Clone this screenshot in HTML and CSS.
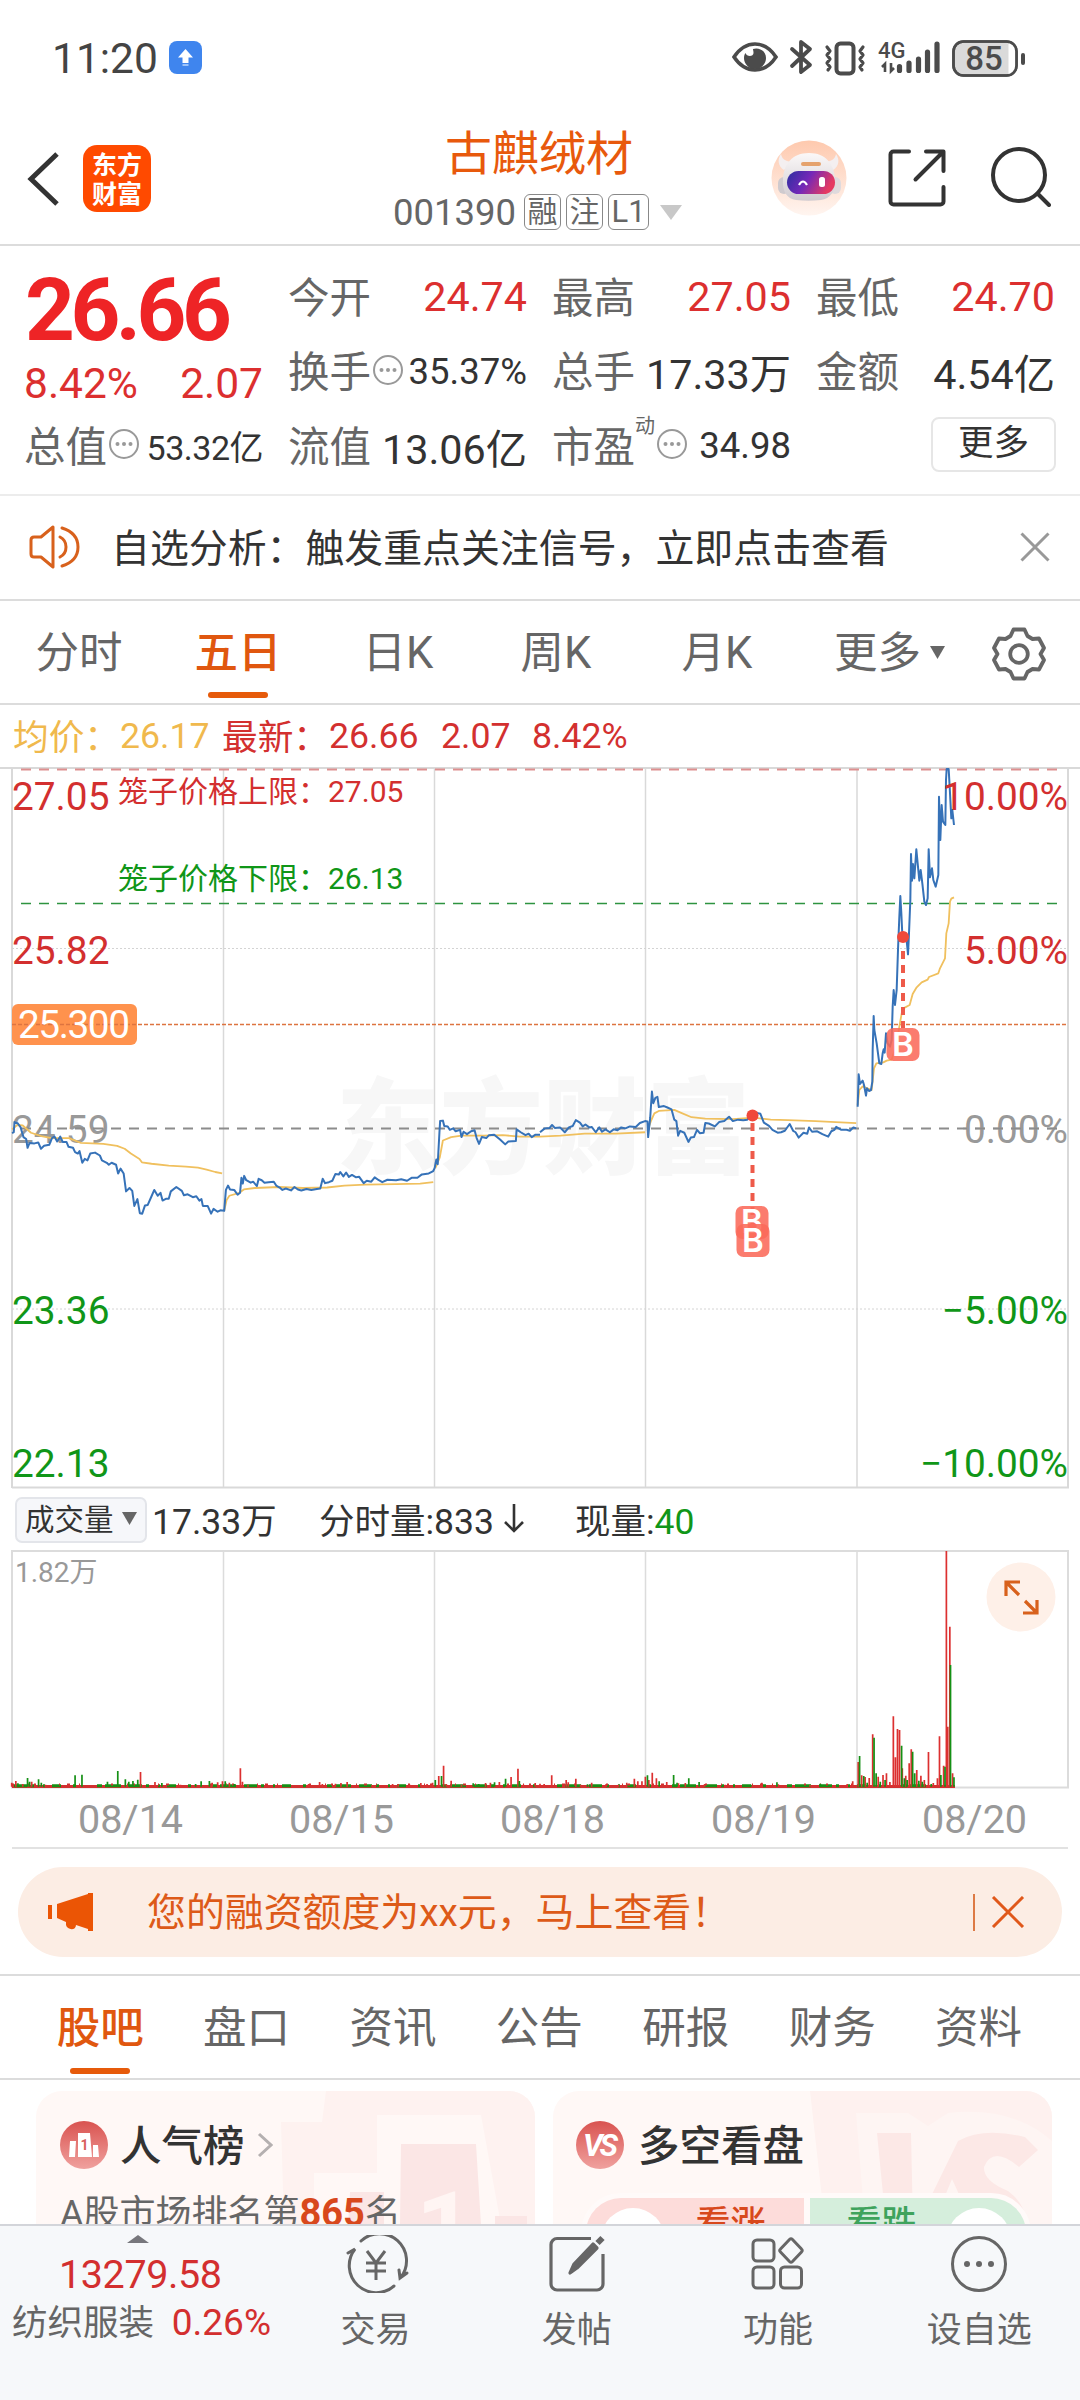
FILE: index.html
```html
<!DOCTYPE html>
<html lang="zh-CN">
<head>
<meta charset="utf-8">
<title>古麒绒材 001390</title>
<link rel="stylesheet" href="styles.css">
</head>
<body>
<div class="status">
  <span class="clock">11:20</span>
  <svg class="app-dot" width="33" height="33" viewBox="0 0 33 33"><rect width="33" height="33" rx="8" fill="#3f85ee"/><path d="M16.500 8l7.500 8.500h-4.500v5.500h-6v-5.500H9z" fill="#fff"/><path d="M13.500 24h6" stroke="#9cc3fa" stroke-width="2"/></svg>
  <svg class="status-icons" width="300" height="50" viewBox="0 0 300 50" fill="none" stroke="#4b4b4b">
    <path d="M3 25C9 16 16 12 24 12s15 4 21 13c-6 9-13 13-21 13S9 34 3 25z" stroke-width="3.600"/>
    <path d="M22 17c5-2 13 1 13 9a11 11 0 0 1-22 0c0-2 .5-4 1.500-5 1 4 8 4 8 0 0-2-.5-3-.5-4z" fill="#4b4b4b" stroke="none"/>
    <path d="M61 17l18 16-9 7V10l9 7-18 17" stroke-width="3.800" stroke-linejoin="round" stroke-linecap="round"/>
    <rect x="105.500" y="11.500" width="17" height="30" rx="4" stroke-width="4"/>
    <path d="M96 15l3 4-3 4 3 4-3 4 3 4-2 3M132 15l-3 4 3 4-3 4 3 4-3 4 2 3" stroke-width="3.200" stroke-linecap="round" stroke-linejoin="round"/>
    <path d="M154 40V32l-3 3M160 31v8l3-3" stroke-width="2.600"/>
    <path d="M168.500 34.500v4M178 31v7.500M187.500 27v11.500M196.500 20v18.500M206 12v26.500" stroke-width="5.200" stroke-linecap="round"/>
    <text class="net" x="147" y="26">4G</text>
    <rect x="222.500" y="9.500" width="63" height="34" rx="10" fill="#dadada" stroke-width="2.600"/>
    <path d="M277.500 11h3a5 5 0 0 1 4 5v21a5 5 0 0 1-4 5h-3z" fill="#fff" stroke="none"/>
    <rect x="222.500" y="9.500" width="63" height="34" rx="10" stroke-width="2.600"/>
    <path d="M292 23v8" stroke-width="4" stroke-linecap="round"/>
    <text class="batt" x="253" y="38">85</text>
  </svg>
</div>

<header class="header">
  <div class="head-left">
    <svg width="32" height="54" viewBox="0 0 32 54" fill="none" stroke="#333" stroke-width="5"><path d="M30 2L4 27l26 25"/></svg>
    <div class="logo"><span>东方</span><span>财富</span></div>
  </div>
  <div class="head-mid">
    <h1>古麒绒材</h1>
    <div class="code-row">
      <span class="code">001390</span><i class="tag">融</i><i class="tag">注</i><i class="tag l1">L1</i>
      <svg width="22" height="15" viewBox="0 0 22 15"><path d="M0 0h22L11 15z" fill="#c8c8c8"/></svg>
    </div>
  </div>
  <div class="head-right">
    <svg width="76" height="76" viewBox="0 0 76 76">
      <defs>
        <linearGradient id="peach" x1="0" y1="0" x2="0" y2="1"><stop offset="0" stop-color="#fec9ae"/><stop offset="1" stop-color="#fff5f0"/></linearGradient>
        <linearGradient id="visor" x1="0" y1="0" x2="1" y2=".3"><stop offset="0" stop-color="#2c2fa0"/><stop offset=".5" stop-color="#7428b8"/><stop offset="1" stop-color="#e53a62"/></linearGradient>
        <linearGradient id="shell" x1="0" y1="0" x2="0" y2="1"><stop offset="0" stop-color="#fbf8f8"/><stop offset="1" stop-color="#d0cbd0"/></linearGradient>
      </defs>
      <circle cx="38" cy="38" r="37.500" fill="url(#peach)"/>
      <path d="M10 14c-4 6-3 12 3 16l7-8c-6-1-9-3-10-8zM65 14c4 6 3 12-3 16l-7-8c6-1 9-3 10-8z" fill="#f4eff0"/>
      <rect x="7" y="37" width="12" height="17" rx="6" fill="#cfcace"/><rect x="58" y="37" width="12" height="17" rx="6" fill="#dfdadd"/>
      <path d="M38 13c17 0 25 11 26 26 1 12-5 20-14 21-8 1-17 1-25 0-9-1-14-9-13-21 1-15 9-26 26-26z" fill="url(#shell)"/>
      <rect x="30" y="22" width="20" height="4" rx="2" fill="#e5a26d"/>
      <rect x="16" y="31" width="48" height="23" rx="11.500" fill="url(#visor)"/>
      <path d="M28 45q4-7 8 0" fill="none" stroke="#fff" stroke-width="2.200"/><rect x="48" y="37" width="6" height="10" rx="2.500" fill="#fff"/>
    </svg>
    <svg width="58" height="58" viewBox="0 0 58 58" fill="none" stroke="#333" stroke-width="4" stroke-linecap="round" stroke-linejoin="round"><path d="M21 2.500H5.500a3 3 0 0 0-3 3v47a3 3 0 0 0 3 3h47a3 3 0 0 0 3-3V38M38 2.500h17.500V22M55 3L27.500 30.500"/></svg>
    <svg width="60" height="60" viewBox="0 0 60 60" fill="none" stroke="#333" stroke-width="4" stroke-linecap="round"><circle cx="28" cy="28" r="26"/><path d="M46.500 46.500L58 58"/></svg>
  </div>
</header>

<section class="quote">
  <div class="price">
    <strong>26.66</strong>
    <div class="chg"><span>8.42%</span><span>2.07</span></div>
  </div>
  <div class="cell"><label>今开</label><b class="up">24.74</b></div>
  <div class="cell"><label>最高</label><b class="up">27.05</b></div>
  <div class="cell"><label>最低</label><b class="up">24.70</b></div>
  <div class="cell"><label>换手</label><svg class="more" viewBox="0 0 32 32"><use href="#dots"/></svg><b class="sm">35.37%</b></div>
  <div class="cell"><label>总手</label><b>17.33万</b></div>
  <div class="cell"><label>金额</label><b>4.54亿</b></div>
  <div class="cell"><label>总值</label><svg class="more" viewBox="0 0 32 32"><use href="#dots"/></svg><b class="xs">53.32亿</b></div>
  <div class="cell"><label>流值</label><b>13.06亿</b></div>
  <div class="cell"><label>市盈</label><sup>动</sup><svg class="more" viewBox="0 0 32 32"><use href="#dots"/></svg><b class="sm">34.98</b></div>
  <div class="cell last"><button>更多</button></div>
</section>
<svg width="0" height="0" class="defs"><defs><g id="dots"><circle cx="16" cy="16" r="14" fill="none" stroke="#999" stroke-width="2"/><circle cx="9.500" cy="16" r="2" fill="#999"/><circle cx="16" cy="16" r="2" fill="#999"/><circle cx="22.500" cy="16" r="2" fill="#999"/></g></defs></svg>

<section class="notice">
  <svg width="52" height="44" viewBox="0 0 52 44" fill="none" stroke="#d8611c" stroke-width="3" stroke-linejoin="round"><path d="M24 2L12 12H5q-3 0-3 3v14q0 3 3 3h7l12 10z"/><path d="M31 12q6 3 6 10t-6 10M33 3q16 5 16 19T33 41" stroke-linecap="round"/></svg>
  <p>自选分析：触发重点关注信号，立即点击查看</p>
  <svg width="30" height="30" viewBox="0 0 30 30" stroke="#999" stroke-width="3"><path d="M1.500 1.500l27 27M28.500 1.500l-27 27"/></svg>
</section>

<nav class="periods">
  <a>分时</a><a class="on">五日</a><a>日K</a><a>周K</a><a>月K</a>
  <a class="pmore">更多<svg width="15" height="13" viewBox="0 0 15 13"><path d="M0 0h15L7.500 13z" fill="#666"/></svg></a>
  <svg width="54" height="54" viewBox="-27 -27 54 54" fill="none" stroke="#666" stroke-width="3.800" stroke-linejoin="round"><path d="M-5.500-24.500H5.500L8.500-18 13.500-15 20-15.500 25-6 21.500 0 25 6 20 15.500 13.500 15 8.500 18 5.500 24.500H-5.500L-8.500 18-13.500 15-20 15.500-25 6-21.500 0-25-6-20-15.500-13.500-15-8.500-18z"/><circle r="8.800"/></svg>
</nav>

<div class="legend">
  <span class="avg">均价：</span><span class="avg v1">26.17</span><span class="v2">最新：</span><span class="v3">26.66</span><span class="v4">2.07</span><span>8.42%</span>
</div>

<svg class="chart" width="1080" height="722" viewBox="0 767 1080 722">
  <g class="mark"><text x="336" y="1166" textLength="414" lengthAdjust="spacingAndGlyphs">东方财富</text></g>
  <g stroke="#d9d9d9" stroke-width="2" fill="none">
    <path d="M0 768H1080M12 1487.500H1069"/><path d="M12 768V1488M1068 768V1488" stroke-width="2"/>
    <path d="M223.500 768V1488M434.500 768V1488M645.500 768V1488M857 768V1488" stroke-width="1.500"/>
  </g>
  <g stroke="#d4d4d4" stroke-dasharray="2 2"><path d="M12 948.500H1068M12 1309H1068"/></g>
  <g class="axis up"><text x="12" y="810">27.05</text><text x="12" y="964">25.82</text></g>
  <g class="axis down"><text x="12" y="1324">23.36</text><text x="12" y="1477">22.13</text></g>
  <g class="axis flat"><text x="12" y="1143">24.59</text></g>
  <path d="M21 769.500H1060" stroke="#dd8f8f" stroke-width="2" stroke-dasharray="10 8"/>
  <path d="M21 903.500H1060" stroke="#2e9440" stroke-width="1.500" stroke-dasharray="10 8"/>
  <path d="M21 1128.500H1060" stroke="#8c8c8c" stroke-width="2" stroke-dasharray="10 8"/>
  <rect x="12" y="1004" width="125" height="41" rx="6" fill="#ff924d"/>
  <path d="M12 1024.500H1068" stroke="#dd7440" stroke-width="1.400" stroke-dasharray="4 2"/>
  <text class="axis cost" x="18" y="1038" textLength="112">25.300</text>
  <g class="cage"><text class="up" x="118" y="802">笼子价格上限：</text><text class="up" x="328" y="802">27.05</text><text class="down" x="118" y="889">笼子价格下限：</text><text class="down" x="328" y="889">26.13</text></g>
  <g class="avgline">
    <path transform="translate(0 760) scale(.34439 .4847)" d="M35 762L50 753 66 754 90 769 120 776 150 780 200 780 235 790 300 792 340 796 362 802 380 812 405 823 412 830 440 833 490 837 540 839 575 841 600 845 625 850 645 853M651 930L658 908 666 899 695 893 708 886 740 883 810 881 880 883 950 882 1000 878 1060 876 1150 875 1220 874 1258 871M1264 842L1277 820 1286 785 1310 778 1340 775 1400 775 1460 774 1510 777 1568 777"/>
    <path transform="translate(540 760) scale(.34439 .4847)" d="M0 777L60 775 130 771 220 771 305 768M312 765L322 745 332 729 345 724 390 722 410 728 440 737 480 740 560 741 620 738 670 742 720 743 800 745 918 749"/>
    <path transform="translate(840 760) scale(.33333)" d="M53 1035L58 990 68 979 80 984 95 990 102 925 109 910 130 907 140 902 155 899 170 850 178 800 186 755 190 745 209 735 218 702 230 682 245 667 263 659 267 651 295 640 300 625 315 595 319 520 326 490 330 425 334 416 342 412"/>
  </g>
  <g class="line">
    <path transform="translate(0 760) scale(.34439 .4847)" d="M35 770L40 768 42 747 52 750 60 758 68 778 76 782 80 800 86 790 100 791 111 789 119 802 128 796 143 794 151 780 158 777 166 787 175 777 182 788 193 788 199 798 212 800 218 809 226 812 231 807 239 831 246 823 254 826 262 812 276 810 290 816 296 826 310 831 316 835 324 831 337 835 343 853 350 843 359 853 366 890 376 883 384 889 390 920 399 906 406 935 413 936 421 919 429 918 440 900 448 887 458 899 466 893 472 909 483 905 490 905 496 890 512 881 528 889 534 898 545 896 560 902 570 900 579 909 585 906 589 920 603 920 613 936 620 926 632 932 640 929 651 930 656 887 662 878 668 886 680 887 690 897 697 893 701 862 705 874 709 858 715 867 728 872 735 870 746 879 751 864 760 867 768 872 780 871 795 870 802 878 812 882 820 887 830 884 845 888 855 881 865 886 875 888 890 885 904 887 920 885 930 884 937 864 944 873 955 871 965 868 974 854 984 855 988 850 997 859 1005 851 1013 860 1022 856 1034 861 1043 860 1056 873 1065 868 1078 870 1088 861 1100 867 1110 871 1125 866 1150 867 1165 865 1182 868 1195 862 1212 862 1225 855 1245 853 1258 848 1262 842 1267 824 1271 834 1276 768 1278 745 1286 744 1290 755 1300 756 1306 763 1316 760 1323 766 1336 763 1340 778 1346 767 1356 772 1368 766 1378 764 1384 780 1391 792 1399 778 1412 780 1420 774 1435 773 1452 783 1467 793 1476 787 1498 786 1500 762 1512 768 1526 774 1535 771 1544 778 1555 773 1568 773"/>
    <path transform="translate(540 760) scale(.34439 .4847)" d="M0 768L14 760 28 759 35 753 43 759 58 758 72 768 84 758 95 755 104 743 116 748 124 756 132 752 143 758 150 757 162 768 172 758 180 767 190 762 203 768 214 762 225 764 236 758 248 760 261 756 278 757 290 749 305 745 312 746 314 778 320 738 325 684 329 708 335 697 341 695 345 716 360 714 370 717 382 721 390 742 396 745 401 775 407 765 419 769 431 788 438 779 447 778 456 763 464 770 475 769 480 749 490 750 508 756 520 747 535 745 549 736 560 745 575 742 590 743 602 742 617 730 629 728 640 730 650 748 665 755 675 763 690 769 700 768 711 765 725 751 735 765 742 768 751 779 765 769 776 771 781 758 790 767 805 766 820 772 837 777 846 766 855 763 860 757 875 763 890 763 900 765 910 758 918 760"/>
    <path transform="translate(840 760) scale(.33333)" d="M53 1040L56 943 60 972 68 962 72 975 78 1007 81 985 87 993 93 990 97 965 98 870 101 768 103 810 110 850 118 910 124 912 128 880 131 868 134 878 138 820 143 850 150 860 155 840 158 740 161 690 165 735 170 690 174 570 178 470 181 408 184 460 187 525 193 520 198 520 204 583 207 520 211 420 213 282 216 362 219 312 223 355 229 268 233 310 238 362 242 330 247 370 253 425 258 435 263 415 266 268 270 352 276 325 280 360 287 380 295 345 297 110 301 240 305 135 309 185 316 195 318 60 320 27 326 27 329 80 334 175 337 150 342 195"/>
  </g>
  <g class="axis right up"><text x="1068" y="810">10.00%</text><text x="1068" y="964">5.00%</text></g>
  <g class="axis right flat"><text x="1068" y="1143">0.00%</text></g>
  <g class="axis right down"><text x="1068" y="1324">−5.00%</text><text x="1068" y="1477">−10.00%</text></g>
  <path d="M963 1128.500H1060" stroke="#8c8c8c" stroke-width="1.500" stroke-dasharray="10 8" stroke-dashoffset="6"/>
  <g stroke="#ee5a4a" stroke-width="4" stroke-dasharray="8 6"><path d="M752.500 1123V1224M903 951V1028"/></g>
  <circle cx="752.500" cy="1115.500" r="6" fill="#f0493a"/><circle cx="903" cy="937" r="6" fill="#f0493a"/>
  <g class="buy"><rect x="735.500" y="1206" width="33" height="33" rx="7"/><text x="752" y="1233">B</text>
  <rect x="736.500" y="1224" width="33" height="33" rx="7"/><text x="753" y="1252">B</text>
  <rect x="886.500" y="1028" width="33" height="33" rx="7"/><text x="903" y="1056">B</text></g>
</svg>

<div class="vol-head">
  <span class="pick">成交量<svg width="15" height="13" viewBox="0 0 15 13"><path d="M0 0h15L7.500 13z" fill="#666"/></svg></span>
  <span class="w1">17.33万</span><span class="w2">分时量:833<svg width="22" height="32" viewBox="0 0 22 32" fill="none" stroke="#333" stroke-width="2.600"><path d="M11 2v27M2 20l9 9 9-9"/></svg></span><span>现量:<em>40</em></span>
</div>

<svg class="volume" width="1080" height="240" viewBox="0 1550 1080 240">
  <g stroke="#dcdcdc" stroke-width="1.500" fill="none"><rect x="12" y="1551" width="1056" height="236.500" stroke-width="2"/><path d="M223.500 1551V1787M434.500 1551V1787M645.500 1551V1787M857 1551V1787"/></g>
  <text class="vmax" x="15" y="1582">1.82万</text>
  <path d="M12 1786.500H955" stroke="#d23030" stroke-width="3"/>
  <path d="M14 1785.800H930" stroke="#159015" stroke-width="3" stroke-dasharray="13 4 3 9 2 7 9 12 3 21 5 3 16 8"/>
  <path d="M12 1784.500H860" stroke="#d23030" stroke-width="2" stroke-dasharray="2 14 1 5 2 23 1 7 3 9 1 31"/>
  <g stroke-width="1.700" fill="none" class="bars">
    <path class="r" transform="translate(0 1480) scale(.68878 .33333)" d="M17 920V908M23 920V903M33 920V912M46 920V905M66 920V914M204 920V876M225 920V906M262 920V914M308 920V908M316 920V907M323 920V904M333 920V908M349 920V865M352 920V905M360 920V914M448 920V912M464 920V906M468 920V912M487 920V911M495 920V909M504 920V906M540 920V915M570 920V912M578 920V912M595 920V914M611 920V909M620 920V912M628 920V908M637 920V888M644 920V857M648 920V912M655 920V902M670 920V914M705 920V909M712 920V908M725 920V906M742 920V891M752 920V866M760 920V914M777 920V909M784 920V911M790 920V912M801 920V886M822 920V900M825 920V907M836 920V896M843 920V914M859 920V908M880 920V912M898 920V914M910 920V908M921 920V896M926 920V904M932 920V904M937 920V890M942 920V900M947 920V878M953 920V895M968 920V906M985 920V910M995 920V909M1023 920V912M1053 920V914M1106 920V908M1130 920V913M1176 920V915M1230 920V912M1238 920V904M1246 920V846M1251 920V886M1256 920V891M1262 920V894M1267 920V763M1275 920V890M1282 920V885M1287 920V880M1292 920V906M1297 920V709M1300 920V832M1303 920V747M1306 920V750M1310 920V865M1315 920V887M1320 920V850M1323 920V808M1331 920V870M1337 920V887M1342 920V900M1348 920V816M1355 920V909M1361 920V895M1364 920V769M1370 920V857M1374 920V213M1376 920V740M1379 920V440M1383 920V880"/>
    <path class="g" transform="translate(0 1480) scale(.68878 .33333)" d="M26 922V910M40 920V894M43 920V905M56 920V898M60 920V908M109 920V886M119 920V884M156 920V905M171 920V873M182 920V898M187 920V905M193 920V903M200 920V899M235 920V909M284 920V912M292 920V904M304 920V903M327 920V904M340 920V912M632 920V900M641 920V888M687 920V910M695 920V912M718 920V907M734 920V896M754 920V903M853 920V913M940 920V886M957 920V904M978 920V885M983 920V908M1000 920V895M1015 920V906M1090 920V914M1128 920V907M1191 920V911M1248 920V828M1254 920V888M1259 920V908M1269 920V773M1272 920V880M1278 920V905M1285 920V900M1309 920V797M1313 920V895M1317 920V900M1325 920V815M1328 920V880M1334 920V902M1339 920V905M1352 920V912M1366 920V885M1372 920V860M1380 920V555M1385 920V892"/>
  </g>
  <circle cx="1021" cy="1597" r="34.500" fill="#fef0e8"/>
  <path d="M1006 1596v-14h14M1007 1583l12 12M1037 1600v13h-14M1036 1612l-11-11" fill="none" stroke="#d8611c" stroke-width="3.200"/>
</svg>
<div class="dates"><span>08/14</span><span>08/15</span><span>08/18</span><span>08/19</span><span>08/20</span></div>

<section class="banner">
  <svg width="46" height="40" viewBox="0 0 46 40" fill="#eb5505"><path d="M0 13h4v14H0zM9 12L40 2V1h5v38h-5v-2l-12-4c0 6-9 5-10 0v-3l-9-4z"/></svg>
  <p>您的融资额度为xx元，马上查看！</p>
  <i></i>
  <svg width="34" height="32" viewBox="0 0 34 32" stroke="#e0581a" stroke-width="3"><path d="M2 1l30 30M32 1L2 31"/></svg>
</section>

<nav class="tabs"><a class="on">股吧</a><a>盘口</a><a>资讯</a><a>公告</a><a>研报</a><a>财务</a><a>资料</a></nav>

<section class="cards">
  <article class="card">
    <svg class="art" width="499" height="134" viewBox="0 0 499 134"><path d="M290 0H499V134H465L445 24H341V82H278V134H248L245 31H286z" fill="#fef2f0"/><path d="M365 53h75l5 81h-81zM314 101h34v33h-36zM459 125h32v9h-32z" fill="#fbe6e5"/><text class="big1" x="380" y="172">1</text></svg>
    <h2><svg width="48" height="48" viewBox="0 0 48 48"><defs><linearGradient id="badge" x1="0" y1="0" x2="0" y2="1"><stop offset="0" stop-color="#d95350"/><stop offset="1" stop-color="#f0a19e"/></linearGradient></defs><circle cx="24" cy="24" r="24" fill="url(#badge)"/><path d="M18 36V12h12l2 24zM10 20h6l-1 16H9zM33 24h5l1 12h-6z" fill="#fff"/><text class="one" x="24.500" y="29">1</text></svg><span>人气榜</span><svg width="16" height="26" viewBox="0 0 16 26" fill="none" stroke="#b5b0b0" stroke-width="3"><path d="M2 2l12 11L2 24"/></svg></h2>
    <p>A股市场排名第<b>865</b>名</p>
  </article>
  <article class="card">
    <svg class="art" width="499" height="134" viewBox="0 0 499 134"><path d="M257 0H499V134H272z" fill="#fef1ef"/><path d="M303 22H355L375 35 395 22Q460 15 499 50V134H312z" fill="#fef5f3"/><path d="M324 42H358L360 134H333zM364 134L405 50Q430 36 472 46L485 59 466 76Q440 54 431 76 430 90 455 100 475 115 472 134H420L399 88 380 134z" fill="#fce8e6"/></svg>
    <h2><svg width="48" height="48" viewBox="0 0 48 48"><circle cx="24" cy="24" r="24" fill="url(#badge)"/><text class="vs" x="23" y="35">VS</text></svg><span>多空看盘</span></h2>
    <div class="pill"><span class="bull">看涨</span><span class="bear">看跌</span></div>
  </article>
</section>

<footer class="dock">
  <div class="index"><svg width="22" height="8" viewBox="0 0 22 8"><path d="M0 8L11 0l11 8z" fill="#77777c"/></svg><strong>13279.58</strong><div><span>纺织服装</span><em>0.26%</em></div></div>
  <a><svg width="66" height="58" viewBox="0 0 66 58" fill="none" stroke="#666" stroke-width="3"><path d="M18 6A27 27 0 0 1 58 42M5 18l7-4A27 27 0 0 0 51 51M64 38l-7 5-1-8" stroke-linecap="round"/><path d="M24 16l9 12 9-12M33 28v17M23 28h20M23 36h20"/></svg>交易</a>
  <a><svg width="58" height="58" viewBox="0 0 58 58" fill="none" stroke="#666" stroke-width="3.200"><path d="M43 3.500H9a6 6 0 0 0-6 6V49a6 6 0 0 0 6 6h40a6 6 0 0 0 6-6V19"/><path d="M22 38l4-9 19-20 4 4-20 20z" fill="#666" stroke-linejoin="round"/><path d="M49.500 8l5-5" stroke-width="6"/></svg>发帖</a>
  <a><svg width="54" height="54" viewBox="0 0 54 54" fill="none" stroke="#666" stroke-width="3"><rect x="2" y="3" width="21" height="21" rx="4"/><rect x="2" y="30" width="21" height="21" rx="4"/><rect x="29.500" y="30" width="21" height="21" rx="4"/><path d="M38.500 2.500q1.500-1.500 3 0l9 9.500q1.500 1.500 0 3l-9 9.500q-1.500 1.500-3 0l-9-9.500q-1.500-1.500 0-3z"/></svg>功能</a>
  <a><svg width="58" height="58" viewBox="0 0 58 58"><circle cx="29" cy="29" r="26.500" fill="none" stroke="#666" stroke-width="3"/><circle cx="17" cy="29" r="3" fill="#666"/><circle cx="29" cy="29" r="3" fill="#666"/><circle cx="41" cy="29" r="3" fill="#666"/></svg>设自选</a>
</footer>
</body>
</html>
```
FILE: styles.css
```css
* { box-sizing: border-box; margin: 0; padding: 0; }
body {
  width: 1080px; height: 2400px; overflow: hidden; background: #fff;
  display: flex; flex-direction: column;
  font-family: Roboto, "Noto Sans CJK SC", sans-serif; color: #333;
}
body > * { flex: none; }
svg { display: block; flex: none; }
i, em { font-style: normal; }
.defs { position: absolute; }

.status { height: 110px; display: flex; align-items: flex-start; padding: 33px 49px 0 52px; }
.clock { font-size: 42.500px; line-height: 51px; color: #444; width: 117px; }
.app-dot { margin-top: 8px; }
.status-icons { margin: -1px 0 0 auto; }
.status-icons text { stroke: none; fill: #4b4b4b; font-weight: 500; }
.net { font-size: 22px; }
.batt { font-size: 33px; text-anchor: middle; }

.header { height: 136px; border-bottom: 2px solid #dcdcdc; display: flex; align-items: flex-start; }
.head-left { width: 390px; display: flex; align-items: center; padding: 35px 0 0 27px; gap: 24px; }
.logo {
  width: 68px; height: 67px; border-radius: 14px; background: #ff4a00; color: #fff;
  display: flex; flex-direction: column; justify-content: center; align-items: center;
  font: 700 25px/29px "Noto Sans CJK SC", sans-serif; padding-bottom: 2px;
}
.head-mid { width: 381px; padding-top: 16px; }
h1 { font-size: 47px; line-height: 56px; font-weight: 400; color: #e8590c; margin-left: 55px; }
.code-row { display: flex; align-items: center; height: 40px; margin-top: 10px; gap: 5px; padding-left: 3px; }
.code { font-size: 36.500px; color: #666; width: 126px; }
.tag { width: 37px; height: 36px; border: 1.500px solid #888; border-radius: 6px; color: #666; font-size: 30px; line-height: 33px; text-align: center; }
.l1 { width: 41px; font-size: 31px; }
.code-row svg { margin-left: 6px; }
.head-right { display: flex; align-items: center; padding-top: 30px; }
.head-right svg + svg { margin-left: 41px; }
.head-right svg:last-child { margin-left: 45px; margin-top: -2px; }

.quote {
  height: 250px; padding: 14px 24px 0; border-bottom: 2px solid #ececec;
  display: grid; grid-template-columns: repeat(4, 239px); grid-template-rows: repeat(3, 74.500px); column-gap: 25px;
}
.price { grid-row: span 2; color: #ee2426; }
.price strong { display: block; font-size: 87px; line-height: 88px; letter-spacing: -4.500px; margin: 6px 0 0 1px; font-weight: 700; }
.chg { display: flex; justify-content: space-between; font-size: 42.500px; line-height: 50px; margin-top: 5px; color: #dc2f2f; }
.cell { display: flex; align-items: center; white-space: nowrap; color: #333; font-size: 41.300px; }
.cell label { font-size: 41.500px; color: #666; margin-top: -5px; }
.cell b { font-weight: 400; margin: -1px 0 0 auto; }
.cell .sm { font-size: 36.500px; }
.cell .xs { font-size: 34px; letter-spacing: -.5px; }
.cell .up { color: #dc2f2f; }
.cell sup { font-size: 20px; color: #666; align-self: flex-start; margin-top: 3px; line-height: 28px; }
.more { width: 32px; height: 32px; margin: -4px 0 0 1px; }
.last { justify-content: flex-end; }
button { width: 125px; height: 55px; border: 2px solid #e6e6e6; border-radius: 8px; background: #fff; font: 35.500px/46px Roboto, "Noto Sans CJK SC", sans-serif; color: #333; margin: -3px -1px 0 0; padding-bottom: 3px; }

.notice { height: 105px; border-bottom: 2px solid #dcdcdc; display: flex; align-items: center; padding: 0 30px 0 29px; }
.notice svg { margin-top: -2px; }
.notice p { font-size: 38.900px; margin: -6px 0 0 30px; flex: 1; }

.periods { height: 104px; border-bottom: 2px solid #dcdcdc; display: grid; align-items: center; grid-template-columns: 158px 160px 160px 156px 166px 192px 1fr; font-size: 43.500px; color: #666; }
.periods a { height: 100%; line-height: 105px; text-align: center; }
.periods .pmore { display: flex; align-items: center; gap: 9px; padding-left: 34px; }
.pmore svg { margin-top: -3px; }
.on { color: #e0570f; font-weight: 500; position: relative; }
.on::after { content: ""; position: absolute; left: 50%; bottom: 8px; width: 60px; height: 6px; margin-left: -30px; border-radius: 3px; background: #e65a0a; }

.legend { height: 62px; display: flex; align-items: center; padding-left: 13px; font-size: 35.700px; color: #d3302f; white-space: nowrap; }
.legend .avg { color: #f0b94d; }
.legend span:first-child { width: 107px; }
.legend span:first-child, .legend .v2 { margin-top: -4px; }
.v1 { width: 102px; }
.v2 { width: 107px; }
.v3 { width: 112px; }
.v4 { width: 91px; }

.axis, .axis text { font-size: 38.800px; }
.axis.right { text-anchor: end; }
.up { fill: #d32f2f; }
.down { fill: #109618; }
.flat { fill: #999; }
.cost { fill: #fff; }
.cage { font-size: 30px; }
.mark { font: 900 104px "Noto Sans CJK SC", sans-serif; fill: #f7f7f7; }
.avgline path, .line path { fill: none; vector-effect: non-scaling-stroke; stroke-linejoin: round; }
.avgline path { stroke: #f0c05e; stroke-width: 1.800; }
.line path { stroke: #3672b8; stroke-width: 2; }
.buy rect { fill: #fa6a5a; fill-opacity: .88; }
.buy text { fill: #fff; font: 600 33px Inter, sans-serif; text-anchor: middle; }

.vol-head { height: 61px; display: flex; align-items: center; padding: 0 0 3px 15px; font-size: 35.500px; white-space: nowrap; }
.pick { width: 132px; height: 46px; border: 2px solid #e3e5ea; border-radius: 7px; background: #f6f7fa; font-size: 29.500px; line-height: 42px; display: flex; align-items: center; justify-content: space-between; padding: 0 8px; margin-top: 3px; }
.pick svg { margin-top: -2px; }
.w1 { width: 167px; margin-left: 5px; }
.w2 { width: 256px; display: flex; align-items: center; gap: 9px; }
.vol-head em { color: #109618; }
.vmax { font-size: 28px; fill: #999; }
.bars path { vector-effect: non-scaling-stroke; }
.r { stroke: #dc3030; }
.g { stroke: #159015; }
.dates { margin: 0 12px; height: 59px; border-bottom: 2px solid #e2e2e2; display: grid; grid-template-columns: repeat(5, 211px); font-size: 39.500px; line-height: 60px; color: #999; text-align: center; padding-left: 13px; }

.banner { margin: 18px 18px 17px; height: 90px; border-radius: 45px; background: #fcede4; display: flex; align-items: center; padding: 0 37px 0 30px; color: #dd5a18; }
.banner p { font-size: 38.900px; margin: -6px 0 0 53px; flex: 1; }
.banner i { width: 2px; height: 37px; background: #dd7a45; margin-right: 16px; }

.tabs { height: 106px; border-top: 2px solid #dcdcdc; border-bottom: 2px solid #dcdcdc; display: grid; grid-template-columns: repeat(7, 146.400px); padding-left: 27px; font-size: 43.500px; line-height: 106px; text-align: center; color: #666; }

.cards { height: 145px; overflow: hidden; display: flex; gap: 18px; padding: 11px 28px 0 36px; }
.card { width: 499px; height: 200px; border-radius: 26px; background: #fff8f6; position: relative; overflow: hidden; }
.art { position: absolute; left: 0; top: 0; }
.card h2 { position: relative; display: flex; align-items: center; gap: 12px; height: 60px; margin: 24px 0 0 24px; font-size: 41.500px; font-weight: 500; }
.card h2 span { margin-top: -5px; }
.card + .card h2 { gap: 14px; margin-left: 23px; }
.card p { position: relative; margin: 12px 0 0 24px; font-size: 36px; line-height: 52px; color: #666; white-space: nowrap; }
.card p b { color: #d8481c; font-weight: 700; font-size: 38px; }
.big1 { font: 700 100px Roboto; fill: #fff5f3; }
.one { font: 700 14px Roboto; fill: #d9605c; text-anchor: middle; }
.vs { font: italic 700 31px Roboto; fill: #fff; text-anchor: middle; letter-spacing: -3px; }
.pill { position: relative; margin: 18px 0 0 28px; width: 450px; height: 80px; border: 5px solid #fffaf9; border-radius: 48px; display: flex; gap: 6px; overflow: hidden; font-size: 35px; font-weight: 500; line-height: 52px; background: #fffaf9; }
.pill span { flex: 1; padding-top: 1px; position: relative; }
.pill span::before { content: ""; position: absolute; top: 10px; width: 64px; height: 64px; border-radius: 50%; background: #fff; }
.bull { background: #fddcda; color: #d8481c; text-align: right; padding-right: 38px; }
.bear { background: #d5eedc; color: #3ea35c; padding-left: 37px; }
.bull::before { left: 15px; }
.bear::before { right: 15px; }

.dock { height: 177px; margin-top: -1px; border-top: 2px solid #d3d5da; background: #f6f8fa; display: grid; grid-template-columns: 275px repeat(4, 201.250px); color: #666; font-size: 35px; position: relative; }
.dock a { display: flex; flex-direction: column; align-items: center; padding-top: 9px; line-height: 48px; }
.dock a svg { height: 58px; margin-bottom: 14px; }
.index { padding: 9px 0 0 12px; white-space: nowrap; }
.index svg { margin-left: 115px; }
.index strong { display: block; font-weight: 400; font-size: 39.500px; line-height: 48px; color: #d32f2f; margin: 8px 0 0 47px; letter-spacing: -.4px; }
.index div { display: flex; justify-content: space-between; width: 259px; line-height: 48px; font-size: 35.500px; }
.index em { color: #d32f2f; font-size: 37px; }
```
